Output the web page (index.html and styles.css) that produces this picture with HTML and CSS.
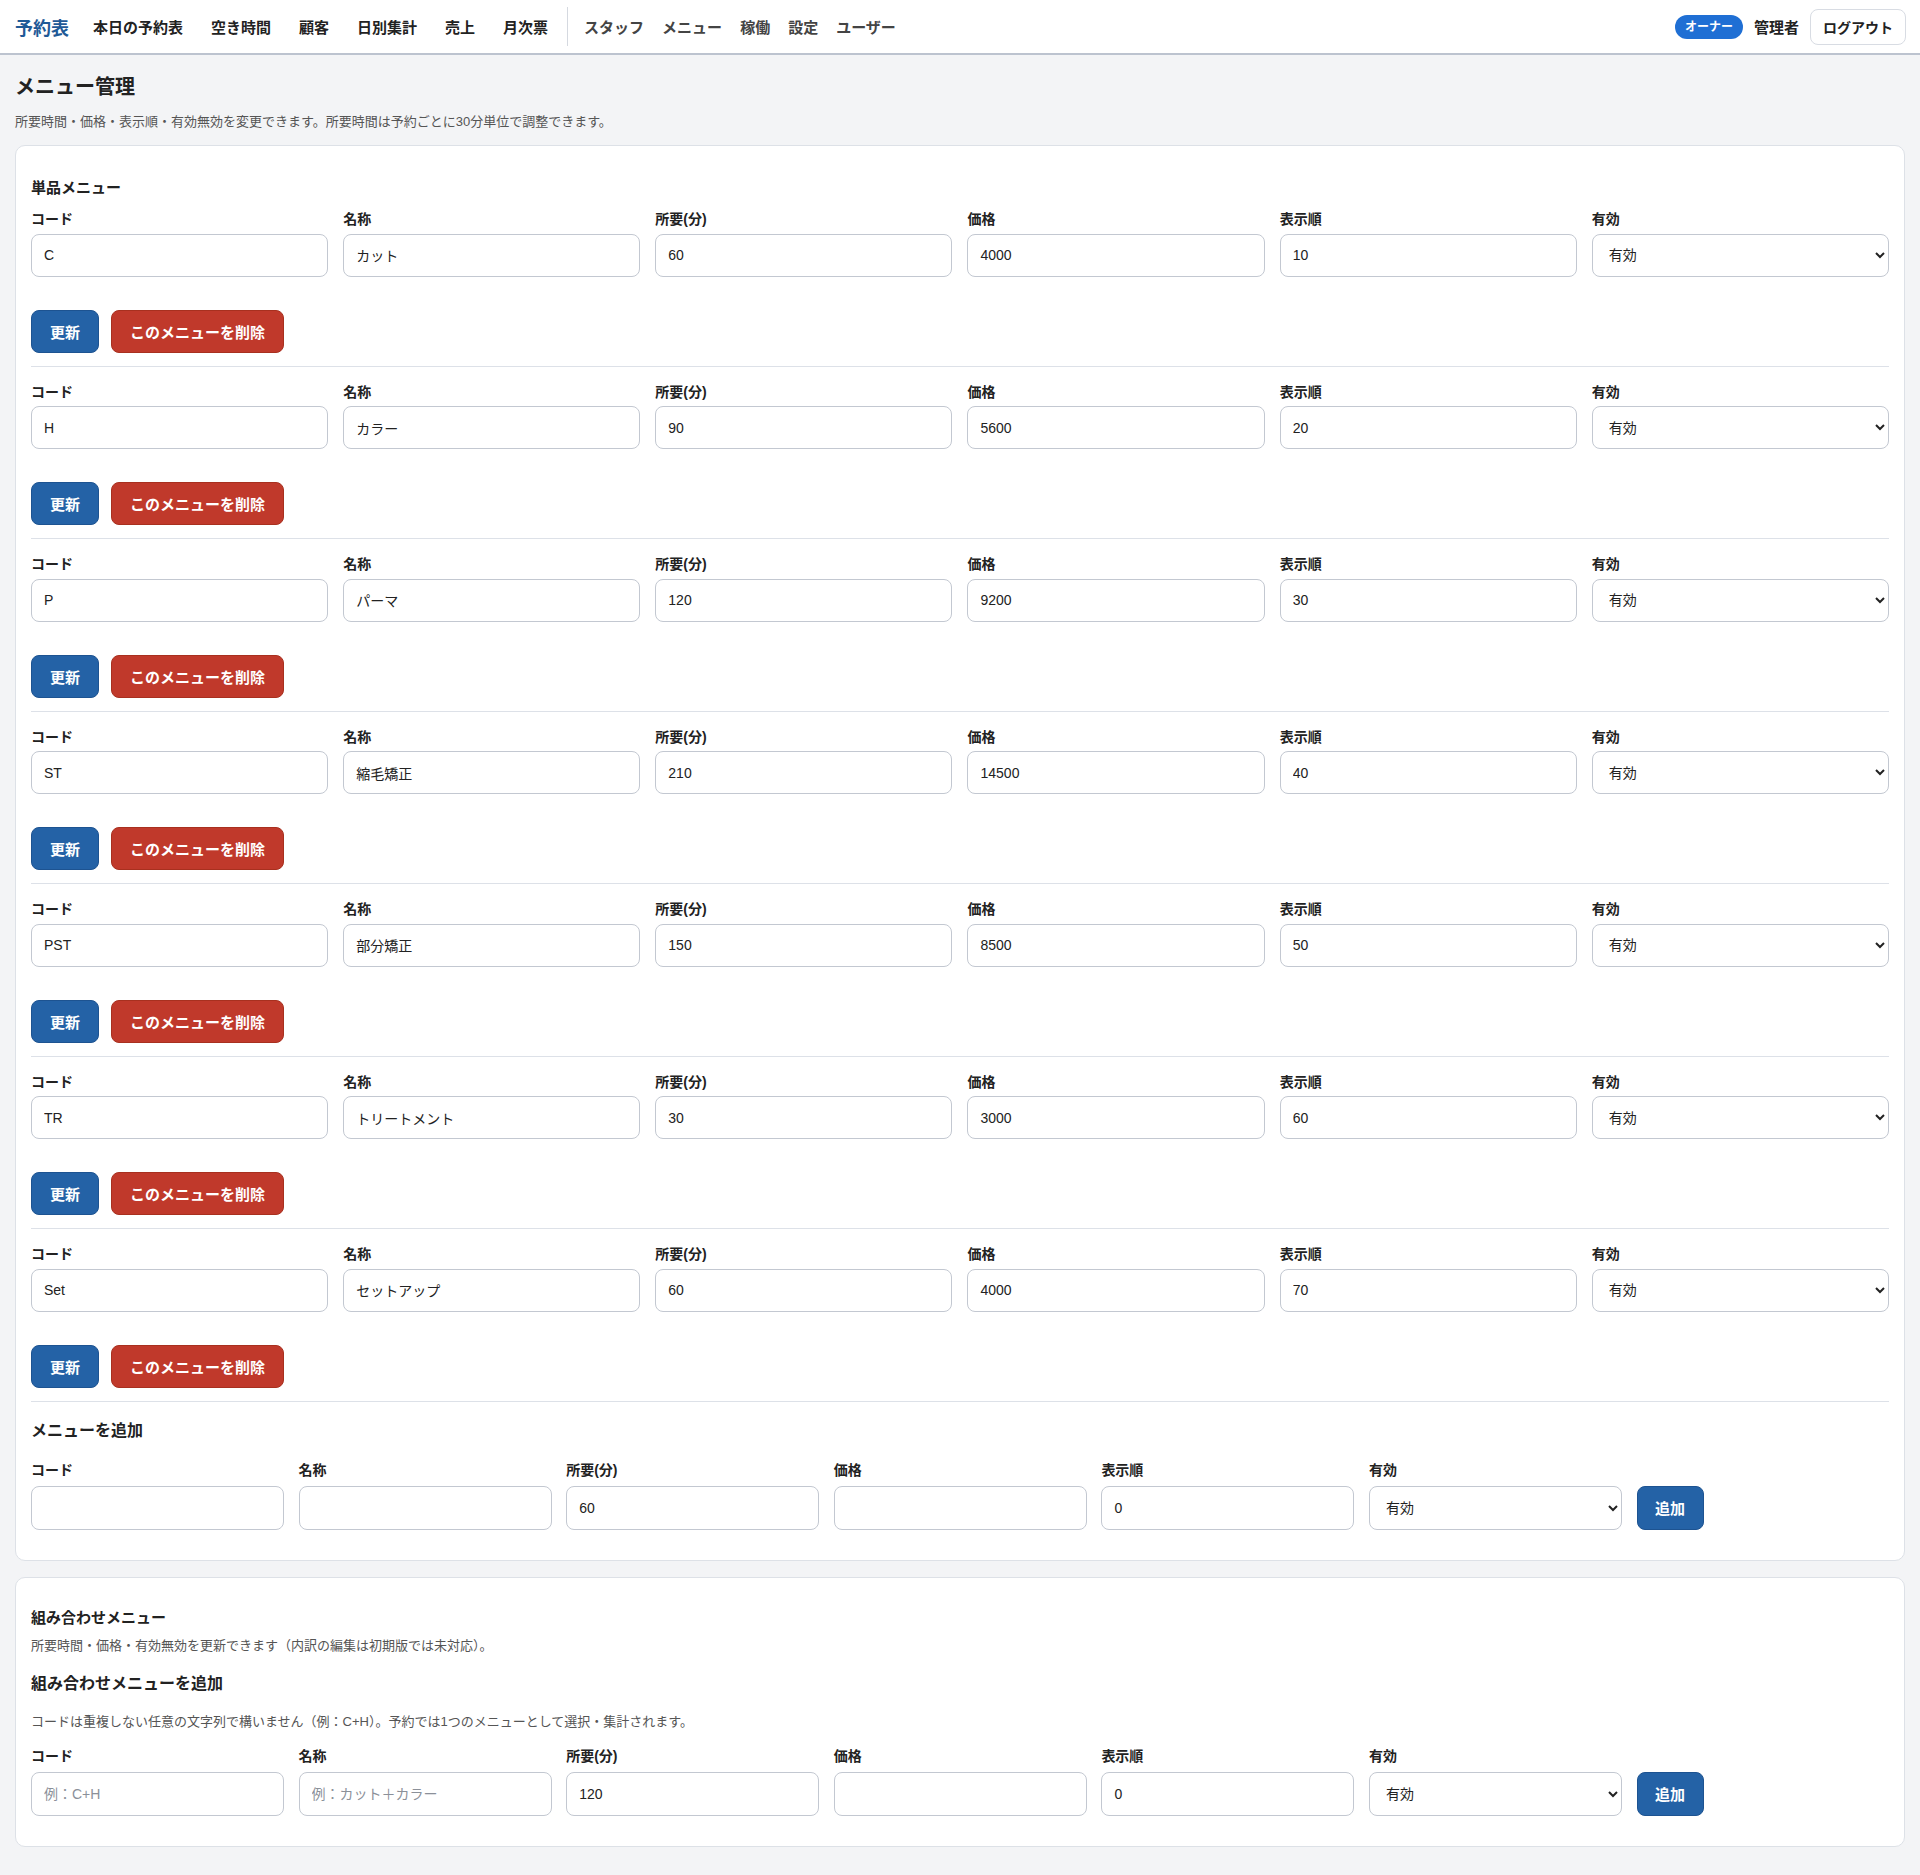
FILE: index.html
```html
<!DOCTYPE html>
<html lang="ja">
<head>
<meta charset="utf-8">
<title>メニュー管理</title>
<link rel="stylesheet" href="styles.css">
</head>
<body>
<header class="topnav">
  <nav class="nav-left">
    <a class="logo" href="#">予約表</a>
    <div class="nav-group main-group">
      <a href="#">本日の予約表</a>
      <a href="#">空き時間</a>
      <a href="#">顧客</a>
      <a href="#">日別集計</a>
      <a href="#">売上</a>
      <a href="#">月次票</a>
    </div>
    <span class="nav-sep"></span>
    <div class="nav-group admin-group">
      <a href="#">スタッフ</a>
      <a href="#">メニュー</a>
      <a href="#">稼働</a>
      <a href="#">設定</a>
      <a href="#">ユーザー</a>
    </div>
  </nav>
  <div class="nav-right">
    <span class="role-badge">オーナー</span>
    <span class="user-name">管理者</span>
    <button class="logout-btn" type="button">ログアウト</button>
  </div>
</header>

<main class="page">
  <h1 class="page-title">メニュー管理</h1>
  <p class="page-desc">所要時間・価格・表示順・有効無効を変更できます。所要時間は予約ごとに30分単位で調整できます。</p>

  <section class="card">
    <h2 class="card-title">単品メニュー</h2>

    <div id="rows"></div>

    <div class="add-section">
      <h3 class="add-title">メニューを追加</h3>
      <div class="add-grid">
        <label class="field"><span class="field-label">コード</span><input class="input" type="text" value=""></label>
        <label class="field"><span class="field-label">名称</span><input class="input" type="text" value=""></label>
        <label class="field"><span class="field-label">所要(分)</span><input class="input" type="text" value="60"></label>
        <label class="field"><span class="field-label">価格</span><input class="input" type="text" value=""></label>
        <label class="field"><span class="field-label">表示順</span><input class="input" type="text" value="0"></label>
        <label class="field"><span class="field-label">有効</span><select class="input select"><option>有効</option><option>無効</option></select></label>
        <button class="btn btn-primary add-btn" type="button">追加</button>
      </div>
    </div>
  </section>

  <section class="card combo-card">
    <h2 class="card-title">組み合わせメニュー</h2>
    <p class="card-desc">所要時間・価格・有効無効を更新できます（内訳の編集は初期版では未対応）。</p>
    <h3 class="add-title combo-add-title">組み合わせメニューを追加</h3>
    <p class="card-note">コードは重複しない任意の文字列で構いません（例：C+H）。予約では1つのメニューとして選択・集計されます。</p>
    <div class="add-grid">
      <label class="field"><span class="field-label">コード</span><input class="input" type="text" placeholder="例：C+H"></label>
      <label class="field"><span class="field-label">名称</span><input class="input" type="text" placeholder="例：カット＋カラー"></label>
      <label class="field"><span class="field-label">所要(分)</span><input class="input" type="text" value="120"></label>
      <label class="field"><span class="field-label">価格</span><input class="input" type="text" value=""></label>
      <label class="field"><span class="field-label">表示順</span><input class="input" type="text" value="0"></label>
      <label class="field"><span class="field-label">有効</span><select class="input select"><option>有効</option><option>無効</option></select></label>
      <button class="btn btn-primary add-btn" type="button">追加</button>
    </div>
  </section>
</main>

<script>
  var menus = [
    ["C", "カット", "60", "4000", "10"],
    ["H", "カラー", "90", "5600", "20"],
    ["P", "パーマ", "120", "9200", "30"],
    ["ST", "縮毛矯正", "210", "14500", "40"],
    ["PST", "部分矯正", "150", "8500", "50"],
    ["TR", "トリートメント", "30", "3000", "60"],
    ["Set", "セットアップ", "60", "4000", "70"]
  ];
  var labels = ["コード", "名称", "所要(分)", "価格", "表示順"];
  var html = "";
  menus.forEach(function (m) {
    html += '<form class="menu-row"><div class="row-grid">';
    for (var i = 0; i < 5; i++) {
      html += '<label class="field"><span class="field-label">' + labels[i] +
        '</span><input class="input" type="text" value="' + m[i] + '"></label>';
    }
    html += '<label class="field"><span class="field-label">有効</span>' +
      '<select class="input select"><option>有効</option><option>無効</option></select></label>';
    html += '</div><div class="row-actions">' +
      '<button class="btn btn-primary" type="button">更新</button>' +
      '<button class="btn btn-danger" type="button">このメニューを削除</button>' +
      '</div></form>';
  });
  document.getElementById("rows").innerHTML = html;
</script>
</body>
</html>
```

FILE: styles.css
```css
* {
  box-sizing: border-box;
}

html, body {
  margin: 0;
  padding: 0;
}

body {
  background: #f3f4f6;
  color: #222;
  font-family: "Liberation Sans", "Noto Sans CJK JP", sans-serif;
}

a {
  text-decoration: none;
}

/* ---------- top navigation ---------- */
.topnav {
  height: 55px;
  background: #fff;
  border-bottom: 2px solid #bcc3cf;
  display: flex;
  align-items: center;
  justify-content: space-between;
  padding: 0 14px 0 15px;
}

.nav-left {
  display: flex;
  align-items: center;
  height: 100%;
}

.logo {
  color: #1f5a97;
  font-size: 18px;
  font-weight: 700;
  margin-right: 24px;
}

.nav-group {
  display: flex;
  align-items: center;
}

.nav-group a {
  font-size: 15px;
  font-weight: 700;
  color: #222;
}

.main-group {
  gap: 28px;
}

.admin-group {
  gap: 18px;
}

.admin-group a {
  color: #444;
}

.nav-sep {
  width: 1px;
  height: 39px;
  background: #d5d9e0;
  margin: 0 16px 0 19px;
}

.nav-right {
  display: flex;
  align-items: center;
  gap: 11px;
}

.role-badge {
  background: #1f6fd4;
  color: #fff;
  font-size: 12px;
  font-weight: 700;
  height: 24px;
  line-height: 24px;
  padding: 0 10px;
  border-radius: 12px;
}

.user-name {
  font-size: 15px;
  font-weight: 700;
  color: #222;
}

.logout-btn {
  height: 36px;
  padding: 0 12px;
  background: #fff;
  border: 1px solid #d8dce3;
  border-radius: 8px;
  font-family: inherit;
  font-size: 14px;
  font-weight: 700;
  color: #222;
}

/* ---------- page ---------- */
.page {
  padding: 0 15px 29px;
}

.page-title {
  margin: 18px 0 0;
  font-size: 20px;
  line-height: 28px;
  font-weight: 700;
  color: #222;
}

.page-desc {
  margin: 12px 0 0;
  font-size: 13px;
  line-height: 18px;
  color: #555;
}

.card {
  background: #fff;
  border: 1px solid #dde1e7;
  border-radius: 10px;
  padding: 31px 15px 30px;
  margin-top: 14px;
}

.card + .card {
  margin-top: 16px;
}

.combo-card {
  padding-top: 29px;
  padding-bottom: 30px;
}

.card-title {
  margin: 0 0 10px;
  font-size: 15px;
  line-height: 22px;
  font-weight: 700;
  color: #222;
}

/* ---------- fields ---------- */
.field {
  display: flex;
  flex-direction: column;
  min-width: 0;
}

.field-label {
  font-size: 14px;
  line-height: 20px;
  font-weight: 700;
  color: #222;
  margin-bottom: 4.5px;
}

.input {
  width: 100%;
  height: 43px;
  border: 1px solid #c3c8d1;
  border-radius: 8px;
  background: #fff;
  padding: 0 12px;
  font-family: inherit;
  font-size: 14px;
  color: #222;
}

.input::placeholder {
  color: #8b9099;
}

.select {
  padding: 0 6px 0 12px;
}

/* ---------- rows ---------- */
.menu-row {
  margin: 0;
  padding: 15px 0 13px;
  border-bottom: 1px solid #dde1e8;
}

.menu-row:first-child {
  padding-top: 0;
}

.row-grid {
  display: grid;
  grid-template-columns: repeat(6, 1fr);
  column-gap: 15px;
}

.row-actions {
  display: flex;
  gap: 12px;
  margin-top: 33px;
}

.btn {
  height: 43px;
  padding: 0 18px;
  border-radius: 8px;
  font-family: inherit;
  font-size: 15px;
  font-weight: 700;
  color: #fff;
  cursor: pointer;
}

.btn-primary {
  background: #2462a6;
  border: 1px solid #1d5391;
}

.btn-danger {
  background: #c0392b;
  border: 1px solid #a8301f;
}

/* ---------- add forms ---------- */
.add-section {
  padding-top: 18px;
}

.add-title {
  margin: 0 0 18px;
  font-size: 16px;
  line-height: 22px;
  font-weight: 700;
  color: #222;
}

.add-grid {
  display: grid;
  grid-template-columns: repeat(6, 253px) 67px;
  column-gap: 14.6px;
  align-items: end;
}

.add-grid .field-label {
  margin-bottom: 6px;
}

.add-btn {
  padding: 0;
  height: 44px;
}

.add-grid .input {
  height: 44px;
}

.card-desc {
  margin: -2px 0 18px;
  font-size: 13px;
  line-height: 18px;
  color: #555;
}

.combo-add-title {
  margin-bottom: 18px;
}

.card-note {
  margin: 0 0 15px;
  font-size: 13px;
  line-height: 18px;
  color: #555;
}
```
